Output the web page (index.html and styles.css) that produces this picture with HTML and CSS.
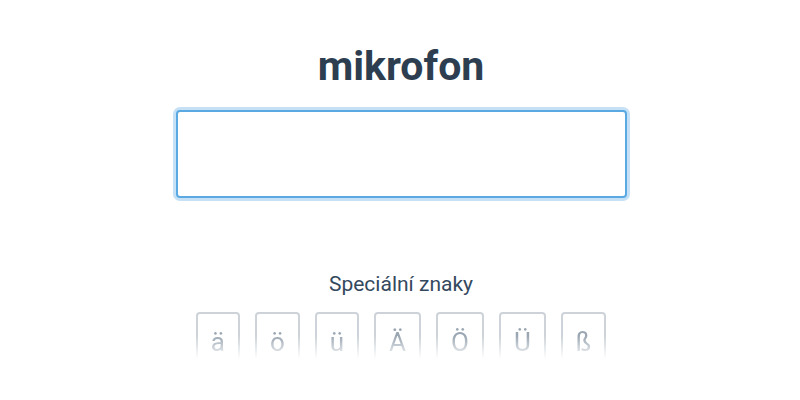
FILE: index.html
```html
<!DOCTYPE html>
<html lang="cs">
<head>
<meta charset="utf-8">
<title>mikrofon</title>
<link rel="stylesheet" href="styles.css">
</head>
<body>
<main class="exercise">
  <h1 class="word">mikrofon</h1>
  <textarea class="answer" aria-label="Odpověď"></textarea>
  <p class="special-label">Speciální znaky</p>
  <div class="special-keys">
    <button class="key">ä</button>
    <button class="key">ö</button>
    <button class="key">ü</button>
    <button class="key">Ä</button>
    <button class="key">Ö</button>
    <button class="key">Ü</button>
    <button class="key">ß</button>
  </div>
</main>
</body>
</html>
```

FILE: styles.css
```css
html, body {
  margin: 0;
  padding: 0;
  background: #ffffff;
}

body {
  font-family: Roboto, "Liberation Sans", Arial, sans-serif;
  width: 800px;
  height: 400px;
  overflow: hidden;
}

.exercise {
  display: flex;
  flex-direction: column;
  align-items: center;
  padding-top: 41px;
  padding-left: 2px;
}

.word {
  margin: 0;
  font-size: 41px;
  line-height: 50px;
  font-weight: 700;
  color: #2c3e50;
}

.answer {
  box-sizing: border-box;
  margin-top: 19px;
  width: 451px;
  height: 88px;
  border: 2px solid #5aa9e3;
  border-radius: 4px;
  box-shadow: 0 0 0 3px #c6e1f5;
  outline: none;
  resize: none;
  padding: 8px 12px;
  font-family: inherit;
  font-size: 20px;
  background: #fff;
}

.special-label {
  margin: 74px 0 0;
  font-size: 21px;
  line-height: 24px;
  color: #34495e;
}

.special-keys {
  display: flex;
  gap: 15px;
  margin-top: 16px;
  -webkit-mask-image: linear-gradient(to bottom, #000 0, #000 24px, transparent 47px);
  mask-image: linear-gradient(to bottom, #000 0, #000 24px, transparent 47px);
}

.key {
  box-sizing: border-box;
  height: 62px;
  padding: 11px 13px 0;
  display: flex;
  align-items: flex-start;
  justify-content: center;
  border: 2px solid #cdd3d8;
  border-radius: 4px;
  background: #ffffff;
  color: #9aa6b2;
  font-family: inherit;
  font-size: 26px;
  line-height: 34px;
}
```
